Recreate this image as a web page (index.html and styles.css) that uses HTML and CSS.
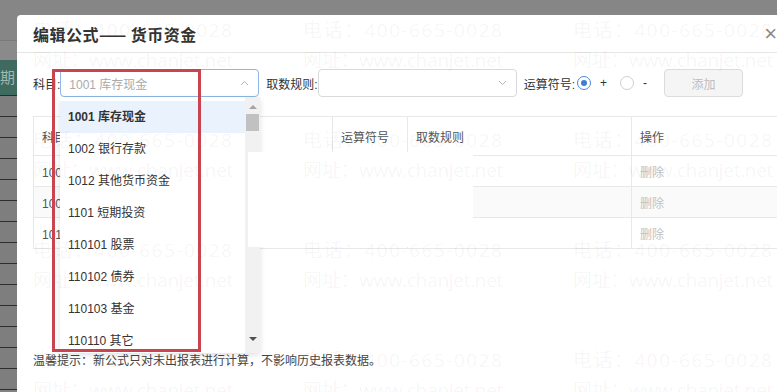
FILE: index.html
```html
<!DOCTYPE html>
<html>
	<head>
		<meta charset="utf-8" />
		<title>编辑公式</title>
		<link rel="stylesheet" href="styles.css">
	</head>
	<body>
		<!-- 底层页面(被遮罩) -->
		<div class="page">
			<div class="page-top"></div>
			<div class="page-bar"></div>
			<div class="page-head">期</div>
			<div class="page-row"></div>
			<div class="page-row"></div>
			<div class="page-row"></div>
			<div class="page-row"></div>
			<div class="page-row"></div>
			<div class="page-row"></div>
			<div class="page-row"></div>
			<div class="page-row"></div>
			<div class="page-row"></div>
			<div class="page-row"></div>
			<div class="page-row"></div>
			<div class="page-row"></div>
			<div class="page-row"></div>
			<div class="page-row"></div>
		</div>

		<!-- 弹窗 -->
		<div class="modal">
			<div class="modal-head">
				<span class="modal-title">编辑公式—— 货币资金</span>
				<span class="modal-close">×</span>
			</div>
			<div class="modal-body">
				<div class="form-row">
					<label class="lbl">科目:</label>
					<div class="select focus">
						<span class="placeholder">1001 库存现金</span>
						<svg class="arrow" width="9" height="6" viewBox="0 0 9 6"><polyline points="1,5 4.5,1.5 8,5" fill="none" stroke="#b5b5b5" stroke-width="1"/></svg>
					</div>
					<label class="lbl gap">取数规则:</label>
					<div class="select">
						<span class="placeholder"></span>
						<svg class="arrow" width="9" height="6" viewBox="0 0 9 6"><polyline points="1,1 4.5,4.5 8,1" fill="none" stroke="#b5b5b5" stroke-width="1"/></svg>
					</div>
					<label class="lbl gap">运算符号:</label>
					<span class="radio checked"></span>
					<span class="radio-text">+</span>
					<span class="radio"></span>
					<span class="radio-text">-</span>
					<button class="btn-add" disabled>添加</button>
				</div>

				<table class="grid">
					<tr>
						<th class="c1">科目</th>
						<th class="c2">运算符号</th>
						<th class="c3">取数规则</th>
						<th>操作</th>
					</tr>
					<tr>
						<td>1001 库存现金</td>
						<td>+</td>
						<td></td>
						<td class="op">删除</td>
					</tr>
					<tr class="odd">
						<td>1002 银行存款</td>
						<td>+</td>
						<td></td>
						<td class="op">删除</td>
					</tr>
					<tr>
						<td>1012 其他货币资金</td>
						<td>+</td>
						<td></td>
						<td class="op">删除</td>
					</tr>
				</table>

				<p class="tip">温馨提示：新公式只对未出报表进行计算，不影响历史报表数据。</p>
			</div>

			<!-- 下拉列表 -->
			<div class="dropdown">
				<ul class="options">
					<li class="current">1001 库存现金</li>
					<li>1002 银行存款</li>
					<li>1012 其他货币资金</li>
					<li>1101 短期投资</li>
					<li>110101 股票</li>
					<li>110102 债券</li>
					<li>110103 基金</li>
					<li>110110 其它</li>
				</ul>
				<div class="scroll">
					<span class="tri up"></span>
					<span class="thumb"></span>
					<span class="tri down"></span>
				</div>
			</div>
			<div class="blank"></div>

			<!-- 水印 -->
			<div class="watermark">
				<div class="wm"><p class="tel">电话：400-665-0028</p><p class="url">网址：www.chanjet.net</p></div>
				<div class="wm"><p class="tel">电话：400-665-0028</p><p class="url">网址：www.chanjet.net</p></div>
				<div class="wm"><p class="tel">电话：400-665-0028</p><p class="url">网址：www.chanjet.net</p></div>
				<div class="wm"><p class="tel">电话：400-665-0028</p><p class="url">网址：www.chanjet.net</p></div>
				<div class="wm"><p class="tel">电话：400-665-0028</p><p class="url">网址：www.chanjet.net</p></div>
				<div class="wm"><p class="tel">电话：400-665-0028</p><p class="url">网址：www.chanjet.net</p></div>
				<div class="wm"><p class="tel">电话：400-665-0028</p><p class="url">网址：www.chanjet.net</p></div>
				<div class="wm"><p class="tel">电话：400-665-0028</p><p class="url">网址：www.chanjet.net</p></div>
				<div class="wm"><p class="tel">电话：400-665-0028</p><p class="url">网址：www.chanjet.net</p></div>
				<div class="wm"><p class="tel">电话：400-665-0028</p><p class="url">网址：www.chanjet.net</p></div>
				<div class="wm"><p class="tel">电话：400-665-0028</p><p class="url">网址：www.chanjet.net</p></div>
				<div class="wm"><p class="tel">电话：400-665-0028</p><p class="url">网址：www.chanjet.net</p></div>
			</div>

			<!-- 标注框 -->
			<div class="mark"></div>
		</div>
	</body>
</html>
```

FILE: styles.css
```css
body,div,ul,li,p,table,th,td{
	margin: 0;
	padding: 0;
}

ul{
	list-style-type: none;
}

body{
	background: #838383;
	font-family: "Liberation Sans", "Noto Sans CJK SC", sans-serif;
	font-size: 12px;
	color: #333333;
	overflow: hidden;
	height: 392px;
}

/* 底层页面 */
.page{
	width: 777px;
	height: 392px;
	overflow: hidden;
}

.page-top{
	height: 40px;
	background: #868686;
}

.page-bar{
	height: 20px;
	background: #8a8a8a;
	border-top: 1px solid #7a7a7a;
	box-sizing: border-box;
}

.page-head{
	height: 36px;
	background: #3f6a60;
	border-bottom: 1px solid #2c2c2c;
	box-sizing: border-box;
	color: #9fb8b0;
	font-size: 15px;
	line-height: 36px;
}

.page-row{
	height: 21px;
	background: #7e7e7e;
	border-bottom: 1px solid #2e2e2e;
	box-sizing: border-box;
}

/* 弹窗 */
.modal{
	position: absolute;
	left: 17px;
	top: 15px;
	width: 790px;
	height: 377px;
	background: #ffffff;
	border-radius: 4px 4px 0 0;
	overflow: hidden;
}

.modal-head{
	height: 38px;
	border-bottom: 1px solid #e6e6e6;
	box-sizing: border-box;
	display: flex;
	align-items: center;
	justify-content: space-between;
	padding: 0 30px 0 16px;
}

.modal-title{
	font-size: 16px;
	font-weight: bold;
	letter-spacing: 0.5px;
	color: #333333;
	font-family: "Noto Sans CJK SC", sans-serif;
}

.modal-close{
	font-size: 22px;
	color: #8c8c8c;
	line-height: 1;
}

.modal-body{
	padding: 16px 16px 0 16px;
}

.form-row{
	display: flex;
	align-items: center;
	height: 28px;
}

.lbl{
	color: #333333;
	white-space: nowrap;
}

.lbl.gap{
	margin-left: 7px;
}

.select{
	width: 199px;
	height: 28px;
	box-sizing: border-box;
	border: 1px solid #d9d9d9;
	border-radius: 4px;
	display: flex;
	align-items: center;
	justify-content: space-between;
	padding: 0 9px 0 8px;
}

.select.focus{
	border-color: #8db7e6;
}

.placeholder{
	color: #aaaaaa;
}

.radio{
	width: 14px;
	height: 14px;
	box-sizing: border-box;
	border: 1px solid #cfcfcf;
	border-radius: 50%;
	margin-left: 2px;
	display: flex;
	align-items: center;
	justify-content: center;
}

.radio.checked{
	border-color: #4a88d6;
}

.radio.checked::after{
	content: "";
	width: 6px;
	height: 6px;
	border-radius: 50%;
	background: #3c7fd5;
}

.radio-text{
	margin-left: 9px;
	margin-right: 11px;
	color: #333333;
}

.btn-add{
	margin-left: 6px;
	width: 79px;
	height: 28px;
	border: 1px solid #dcdcdc;
	border-radius: 4px;
	background: #f5f5f5;
	color: #bdbdbd;
	font-family: "Noto Sans CJK SC", sans-serif;
	font-size: 12px;
}

/* 表格 */
.grid{
	margin-top: 19px;
	width: 760px;
	border-collapse: collapse;
	table-layout: fixed;
}

.grid th,
.grid td{
	border: 1px solid #e8e8e8;
	padding: 0 8px;
	text-align: left;
	font-weight: normal;
	white-space: nowrap;
	overflow: hidden;
}

.grid th{
	height: 38px;
	color: #555555;
}

.grid td{
	height: 30px;
	color: #555555;
}

.grid .c1{
	width: 282px;
}

.grid .c2{
	width: 58px;
}

.grid .c3{
	width: 207px;
}

.grid tr.odd td{
	background: #fafafa;
}

.grid td.op{
	color: #c2c2c2;
}

.tip{
	margin-top: 102px;
	line-height: 20px;
	color: #444444;
}

/* 下拉 */
.dropdown{
	position: absolute;
	left: 43px;
	top: 82px;
	width: 200px;
	height: 256px;
	background: #ffffff;
	box-shadow: 0 2px 6px rgba(0,0,0,0.12);
	display: flex;
	overflow: hidden;
}

.options{
	flex: 1;
	padding-top: 4px;
}

.options li{
	height: 32px;
	line-height: 32px;
	padding-left: 8px;
	color: #333333;
	white-space: nowrap;
}

.options li.current{
	background: #eaf3fd;
	font-weight: bold;
}

.scroll{
	width: 15px;
	background: #f1f1f1;
	display: flex;
	flex-direction: column;
	align-items: center;
	padding-top: 8px;
	box-sizing: border-box;
}

.tri{
	width: 0;
	height: 0;
	border-left: 4px solid transparent;
	border-right: 4px solid transparent;
}

.tri.up{
	border-bottom: 4px solid #a3a3a3;
}

.tri.down{
	border-top: 4px solid #505050;
	margin-top: auto;
	margin-bottom: 12px;
}

.thumb{
	width: 13px;
	height: 17px;
	background: #c1c1c1;
	margin-top: 5px;
}

.blank{
	position: absolute;
	left: 231px;
	top: 137px;
	width: 225px;
	height: 95px;
	background: #ffffff;
}

/* 水印 */
.watermark{
	position: absolute;
	left: 0;
	top: 0;
	right: 0;
	bottom: 0;
	padding-left: 16px;
	display: grid;
	grid-template-columns: repeat(3, 270px);
	grid-auto-rows: 110px;
	pointer-events: none;
	font-family: "Open Sans", "Noto Sans CJK SC", sans-serif;
	font-size: 19px;
	color: rgba(0,0,0,0.05);
	white-space: nowrap;
	overflow: hidden;
}

.wm p{
	line-height: 30px;
}

.wm .tel{
	letter-spacing: 1.5px;
}

.wm .url{
	letter-spacing: -0.3px;
}

/* 标注 */
.mark{
	position: absolute;
	left: 35px;
	top: 54px;
	width: 149px;
	height: 283px;
	border: 3px solid #c9444f;
	box-sizing: border-box;
}
```
